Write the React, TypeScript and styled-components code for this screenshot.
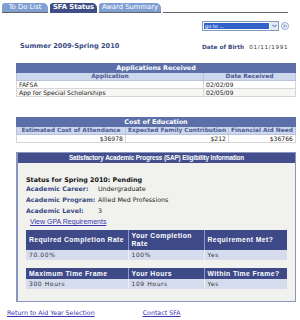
import React from 'react';
import styled, { createGlobalStyle } from 'styled-components';

const GlobalStyle = createGlobalStyle`
  body {
    margin: 0;
    background: #ffffff;
  }
`;

const Page = styled.div`
  width: 300px;
  height: 320px;
  overflow: hidden;
  background: #ffffff;
  font-family: 'DejaVu Sans', Verdana, sans-serif;
  font-size: 6px;
  color: #222;
`;

const TabBar = styled.div`
  display: flex;
  align-items: flex-end;
  width: 286px;
  padding: 3px 0 0 2px;
`;

const Tab = styled.div<{ $active?: boolean; $width: number }>`
  width: ${({ $width }) => $width}px;
  height: 9px;
  margin-right: 2px;
  border-radius: 3px 5px 0 0;
  background: ${({ $active }) => ($active ? '#3f4f86' : '#7f9fd3')};
  color: #ffffff;
  font-size: 6.8px;
  font-weight: ${({ $active }) => ($active ? 'bold' : 'normal')};
  line-height: 9px;
  text-align: center;
  white-space: nowrap;
  overflow: hidden;
  border-bottom: 1px solid ${({ $active }) => ($active ? '#3f4f86' : '#666')};
`;

const TabRule = styled.div`
  flex: 1;
  border-bottom: 1px solid #666;
`;

const TopArea = styled.div`
  display: flex;
  justify-content: space-between;
  align-items: flex-end;
  height: 40px;
  padding: 0 11px 0 20px;
`;

const Title = styled.div`
  color: #3b4a82;
  font-size: 6.6px;
  font-weight: bold;
  padding-bottom: 3px;
`;

const RightBlock = styled.div`
  display: flex;
  flex-direction: column;
  align-items: flex-start;
  padding-bottom: 3px;
`;

const GoToRow = styled.div`
  display: flex;
  align-items: center;
  gap: 2px;
  margin-bottom: 13px;
`;

const SelectBox = styled.div`
  display: flex;
  width: 75px;
  height: 8px;
  border: 1px solid #7f9db9;
  background: #ffffff;
`;

const SelectValue = styled.div`
  flex: 1;
  margin: 1px;
  background: #3163c9;
  color: #ffffff;
  font-size: 5px;
  line-height: 6px;
  padding-left: 1px;
`;

const SelectArrow = styled.div`
  width: 8px;
  display: flex;
  align-items: center;
  justify-content: center;
  background: #e3e9f5;
`;

const GoButton = styled.div`
  width: 8px;
  height: 8px;
  display: flex;
  align-items: center;
  justify-content: center;
`;

const DobRow = styled.div`
  display: flex;
  gap: 5px;
  align-items: baseline;
`;

const DobLabel = styled.span`
  color: #3b4a82;
  font-weight: bold;
  font-size: 5.8px;
`;

const DobValue = styled.span`
  font-size: 5.6px;
  letter-spacing: 0.7px;
  color: #333;
`;

const DataTable = styled.table<{ $top: number }>`
  margin: ${({ $top }) => $top}px 0 0 16px;
  width: 280px;
  border-collapse: collapse;
  table-layout: fixed;

  th, td {
    padding: 0 2px;
    white-space: nowrap;
    overflow: hidden;
  }
`;

const Col = styled.col<{ $width?: number }>`
  width: ${({ $width }) => ($width ? `${$width}px` : 'auto')};
`;

const CaptionCell = styled.th`
  height: 8px;
  line-height: 8px;
  background: #5d6fa8;
  color: #ffffff;
  font-weight: bold;
  font-size: 6.4px;
  text-align: center;
  border: 1px solid #5d6fa8;
`;

const HeadCell = styled.th`
  height: 7px;
  line-height: 7px;
  background: #cdd8ee;
  color: #4a5b92;
  font-weight: bold;
  font-size: 5.9px;
  text-align: center;
  border: 1px solid #b9c3dc;
`;

const BodyCell = styled.td<{ $right?: boolean; $shade?: boolean }>`
  height: 7px;
  line-height: 7px;
  background: ${({ $shade }) => ($shade ? '#f6f6f4' : '#ffffff')};
  border: 1px solid #d6d6d6;
  text-align: ${({ $right }) => ($right ? 'right' : 'left')};
  font-size: 6.1px;
  color: #222;
`;

const SapBox = styled.div`
  margin: 9px 0 0 16px;
  width: 280px;
  border: 1px solid #8a96bd;
  border-left-width: 2px;
  box-sizing: border-box;
  background: #f1f2ee;
`;

const SapHeader = styled.div`
  height: 10px;
  background: #424f8c;
  color: #ffffff;
  font-family: 'Liberation Sans', Arial, sans-serif;
  font-size: 6.4px;
  font-weight: bold;
  letter-spacing: -0.15px;
  line-height: 10px;
  text-align: center;
  white-space: nowrap;
`;

const SapBody = styled.div`
  padding: 13px 9px 12px 8px;
`;

const StatusLine = styled.div`
  font-weight: bold;
  color: #111;
  font-size: 6.4px;
  line-height: 8px;
  margin-bottom: 1px;
`;

const InfoGrid = styled.div`
  display: grid;
  grid-template-columns: 72px 1fr;
  row-gap: 3px;
  line-height: 8px;
`;

const InfoLabel = styled.div`
  color: #3b4a82;
  font-weight: bold;
  font-size: 6.3px;
  white-space: nowrap;
`;

const InfoValue = styled.div`
  color: #222;
  font-size: 6.3px;
`;

const Link = styled.a<{ $size?: number }>`
  color: #3a33b0;
  text-decoration: underline;
  font-size: ${({ $size }) => $size ?? 6.3}px;
  line-height: 8px;
  cursor: pointer;
`;

const GpaLink = styled.div`
  margin: 3px 0 4px 4px;
  line-height: 8px;
  font-family: 'Liberation Sans', Arial, sans-serif;
`;

const GridTable = styled.table<{ $top: number }>`
  margin-top: ${({ $top }) => $top}px;
  width: 261px;
  border-collapse: collapse;
  table-layout: fixed;
  font-family: 'Liberation Sans', Arial, sans-serif;
`;

const GridHead = styled.th<{ $tall?: boolean }>`
  height: ${({ $tall }) => ($tall ? 20 : 11)}px;
  background: #3d4a87;
  color: #ffffff;
  font-size: 6.8px;
  font-weight: bold;
  letter-spacing: 0.4px;
  text-align: left;
  padding: 0 3px;
  line-height: 8px;
  border-left: 1px solid #8f9bc6;
  &:first-child {
    border-left: none;
  }
`;

const GridCell = styled.td`
  height: 10px;
  line-height: 10px;
  background: #d5dcee;
  color: #333;
  font-family: 'DejaVu Sans', Verdana, sans-serif;
  font-size: 6px;
  letter-spacing: 0.6px;
  padding: 0 3px;
  border-left: 1px solid #eef0f6;
  white-space: nowrap;
  &:first-child {
    border-left: none;
  }
`;

const Footer = styled.div`
  display: flex;
  padding: 7px 0 0 7px;
  line-height: 8px;
`;

const FooterGap = styled.div`
  width: 48px;
`;

function ChevronDown() {
  return (
    <svg width="5" height="4" viewBox="0 0 5 4">
      <path d="M0.6 0.8 L2.5 2.9 L4.4 0.8" fill="none" stroke="#3a5ba8" strokeWidth="1" />
    </svg>
  );
}

function GoIcon() {
  return (
    <svg width="8" height="8" viewBox="0 0 8 8">
      <circle cx="4" cy="4" r="3.5" fill="#ffffff" stroke="#6f8fcf" strokeWidth="0.8" />
      <path d="M2.2 2.4 L3.7 4 L2.2 5.6 M4.1 2.4 L5.6 4 L4.1 5.6" fill="none" stroke="#4b6cc0" strokeWidth="0.8" />
    </svg>
  );
}

export default function App() {
  return (
    <Page>
      <GlobalStyle />
      <TabBar>
        <Tab $width={46}>To Do List</Tab>
        <Tab $width={47} $active>SFA Status</Tab>
        <Tab $width={62}>Award Summary</Tab>
        <TabRule />
      </TabBar>

      <TopArea>
        <Title>Summer 2009-Spring 2010</Title>
        <RightBlock>
          <GoToRow>
            <SelectBox>
              <SelectValue>go to ...</SelectValue>
              <SelectArrow><ChevronDown /></SelectArrow>
            </SelectBox>
            <GoButton><GoIcon /></GoButton>
          </GoToRow>
          <DobRow>
            <DobLabel>Date of Birth</DobLabel>
            <DobValue>01/11/1991</DobValue>
          </DobRow>
        </RightBlock>
      </TopArea>

      <DataTable $top={10}>
        <colgroup>
          <Col $width={187} />
          <Col />
        </colgroup>
        <thead>
          <tr><CaptionCell colSpan={2}>Applications Received</CaptionCell></tr>
          <tr>
            <HeadCell>Application</HeadCell>
            <HeadCell>Date Received</HeadCell>
          </tr>
        </thead>
        <tbody>
          <tr>
            <BodyCell>FAFSA</BodyCell>
            <BodyCell>02/02/09</BodyCell>
          </tr>
          <tr>
            <BodyCell $shade>App for Special Scholarships</BodyCell>
            <BodyCell $shade>02/05/09</BodyCell>
          </tr>
        </tbody>
      </DataTable>

      <DataTable $top={20}>
        <colgroup>
          <Col $width={109} />
          <Col $width={103} />
          <Col />
        </colgroup>
        <thead>
          <tr><CaptionCell colSpan={3}>Cost of Education</CaptionCell></tr>
          <tr>
            <HeadCell>Estimated Cost of Attendance</HeadCell>
            <HeadCell>Expected Family Contribution</HeadCell>
            <HeadCell>Financial Aid Need</HeadCell>
          </tr>
        </thead>
        <tbody>
          <tr>
            <BodyCell $right>$36978</BodyCell>
            <BodyCell $right>$212</BodyCell>
            <BodyCell $right>$36766</BodyCell>
          </tr>
        </tbody>
      </DataTable>

      <SapBox>
        <SapHeader>Satisfactory Academic Progress (SAP) Eligibility Information</SapHeader>
        <SapBody>
          <StatusLine>Status for Spring 2010: Pending</StatusLine>
          <InfoGrid>
            <InfoLabel>Academic Career:</InfoLabel>
            <InfoValue>Undergraduate</InfoValue>
            <InfoLabel>Academic Program:</InfoLabel>
            <InfoValue>Allied Med Professions</InfoValue>
            <InfoLabel>Academic Level:</InfoLabel>
            <InfoValue>3</InfoValue>
          </InfoGrid>
          <GpaLink><Link $size={7}>View GPA Requirements</Link></GpaLink>

          <GridTable $top={0}>
            <colgroup>
              <Col $width={102} />
              <Col $width={76} />
              <Col />
            </colgroup>
            <thead>
              <tr>
                <GridHead $tall>Required Completion Rate</GridHead>
                <GridHead $tall>Your Completion Rate</GridHead>
                <GridHead $tall>Requirement Met?</GridHead>
              </tr>
            </thead>
            <tbody>
              <tr>
                <GridCell>70.00%</GridCell>
                <GridCell>100%</GridCell>
                <GridCell>Yes</GridCell>
              </tr>
            </tbody>
          </GridTable>

          <GridTable $top={8}>
            <colgroup>
              <Col $width={102} />
              <Col $width={76} />
              <Col />
            </colgroup>
            <thead>
              <tr>
                <GridHead>Maximum Time Frame</GridHead>
                <GridHead>Your Hours</GridHead>
                <GridHead>Within Time Frame?</GridHead>
              </tr>
            </thead>
            <tbody>
              <tr>
                <GridCell>300 Hours</GridCell>
                <GridCell>109 Hours</GridCell>
                <GridCell>Yes</GridCell>
              </tr>
            </tbody>
          </GridTable>
        </SapBody>
      </SapBox>

      <Footer>
        <Link>Return to Aid Year Selection</Link>
        <FooterGap />
        <Link>Contact SFA</Link>
      </Footer>
    </Page>
  );
}
